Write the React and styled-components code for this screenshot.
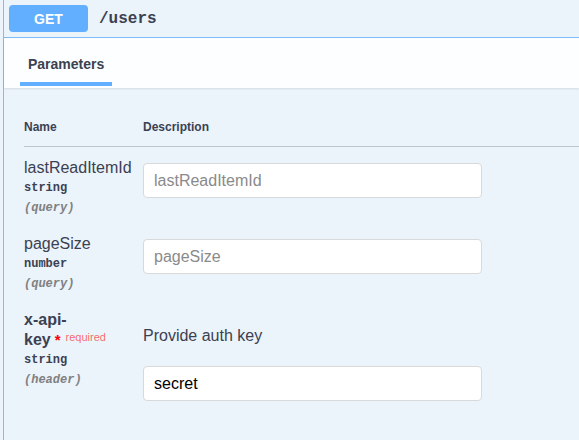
import React from "react";
import styled, { createGlobalStyle } from "styled-components";

const GlobalStyle = createGlobalStyle`
  html, body {
    margin: 0;
    padding: 0;
    background: #edf3fa;
    overflow: hidden;
  }
  #root {
    height: 440px;
  }
`;

const Opblock = styled.div`
  margin-left: 3px;
  height: 440px;
  border-left: 1px solid #7fbcfc;
  background: #ebf3fb;
  font-family: "Liberation Sans", Arial, sans-serif;
  color: #3b4151;
`;

const Summary = styled.div`
  height: 37px;
  display: flex;
  align-items: center;
  padding-left: 5px;
  border-bottom: 1px solid #7fbcfc;
`;

const Method = styled.span`
  width: 79px;
  height: 27px;
  border-radius: 4px;
  background: #61affe;
  color: #fff;
  font-size: 14px;
  font-weight: 700;
  display: flex;
  align-items: center;
  justify-content: center;
`;

const Path = styled.span`
  margin-left: 11px;
  font-family: "Liberation Mono", "Courier New", monospace;
  font-weight: 700;
  font-size: 16px;
  color: #3b4151;
`;

const TabHeader = styled.div`
  height: 50px;
  box-sizing: border-box;
  padding: 0 0 2px 16px;
  display: flex;
  align-items: flex-end;
  background: rgba(255, 255, 255, 0.85);
  box-shadow: 0 1px 2px rgba(0, 0, 0, 0.1);
`;

const Tab = styled.div`
  display: flex;
  flex-direction: column;
  gap: 8px;
`;

const TabLabel = styled.span`
  padding: 0 8px;
  font-size: 14px;
  font-weight: 700;
  line-height: 20px;
`;

const TabBar = styled.span`
  height: 4px;
  background: #61affe;
`;

const TableContainer = styled.div`
  padding: 20px 0 20px 20px;
`;

const HeadRow = styled.div`
  display: grid;
  grid-template-columns: 119px 1fr;
  padding: 11px 0;
  border-bottom: 1px solid rgba(59, 65, 81, 0.25);
  font-size: 12px;
  font-weight: 700;
  line-height: 16px;
`;

const Row = styled.div`
  display: grid;
  grid-template-columns: 119px 1fr;
  padding: 11px 0 5px;
`;

const NameCell = styled.div`
  padding-right: 10px;
`;

const ParamName = styled.div`
  font-size: 16px;
  line-height: 20px;
  font-weight: ${(p) => (p.$required ? 700 : 400)};
`;

const Star = styled.span`
  margin-left: 4px;
  color: red;
  font-size: 15px;
`;

const Required = styled.span`
  position: relative;
  top: -4px;
  padding: 0 4px 0 5px;
  color: rgba(255, 0, 0, 0.6);
  font-size: 11px;
  font-weight: 400;
  line-height: 1;
`;

const ParamType = styled.div`
  font-family: "Liberation Mono", "Courier New", monospace;
  font-size: 12px;
  font-weight: 700;
  line-height: 20px;
`;

const ParamIn = styled.div`
  font-family: "Liberation Mono", "Courier New", monospace;
  font-size: 12px;
  font-style: italic;
  font-weight: 700;
  line-height: 20px;
  color: #808080;
`;

const DescCell = styled.div`
  display: flex;
  flex-direction: column;
  align-items: flex-start;
`;

const Markdown = styled.p`
  margin: 16px 0 15px;
  font-size: 16px;
  line-height: 20px;
`;

const Input = styled.input`
  width: 339px;
  height: 35px;
  box-sizing: border-box;
  margin-top: 5px;
  padding: 0 10px;
  border: 1px solid #d9d9d9;
  border-radius: 4px;
  background: #fff;
  font-family: "Liberation Sans", Arial, sans-serif;
  font-size: 16px;
  color: #000;
  outline: none;

  &::placeholder {
    color: #8a8a8a;
  }
`;

const params = [
  { name: "lastReadItemId", type: "string", in: "query" },
  { name: "pageSize", type: "number", in: "query" },
  {
    name: "x-api-key",
    type: "string",
    in: "header",
    required: true,
    description: "Provide auth key",
    value: "secret",
  },
];

const App = () => (
  <>
    <GlobalStyle />
    <Opblock>
      <Summary>
        <Method>GET</Method>
        <Path>/users</Path>
      </Summary>
      <TabHeader>
        <Tab>
          <TabLabel>Parameters</TabLabel>
          <TabBar />
        </Tab>
      </TabHeader>
      <TableContainer>
        <HeadRow>
          <span>Name</span>
          <span>Description</span>
        </HeadRow>
        {params.map((p) => (
          <Row key={p.name}>
            <NameCell>
              <ParamName $required={p.required}>
                {p.name}
                {p.required && (
                  <>
                    <Star>*</Star>
                    <Required>required</Required>
                  </>
                )}
              </ParamName>
              <ParamType>{p.type}</ParamType>
              <ParamIn>({p.in})</ParamIn>
            </NameCell>
            <DescCell>
              {p.description && <Markdown>{p.description}</Markdown>}
              <Input
                placeholder={p.value ? "" : p.name}
                defaultValue={p.value || ""}
              />
            </DescCell>
          </Row>
        ))}
      </TableContainer>
    </Opblock>
  </>
);

export default App;
